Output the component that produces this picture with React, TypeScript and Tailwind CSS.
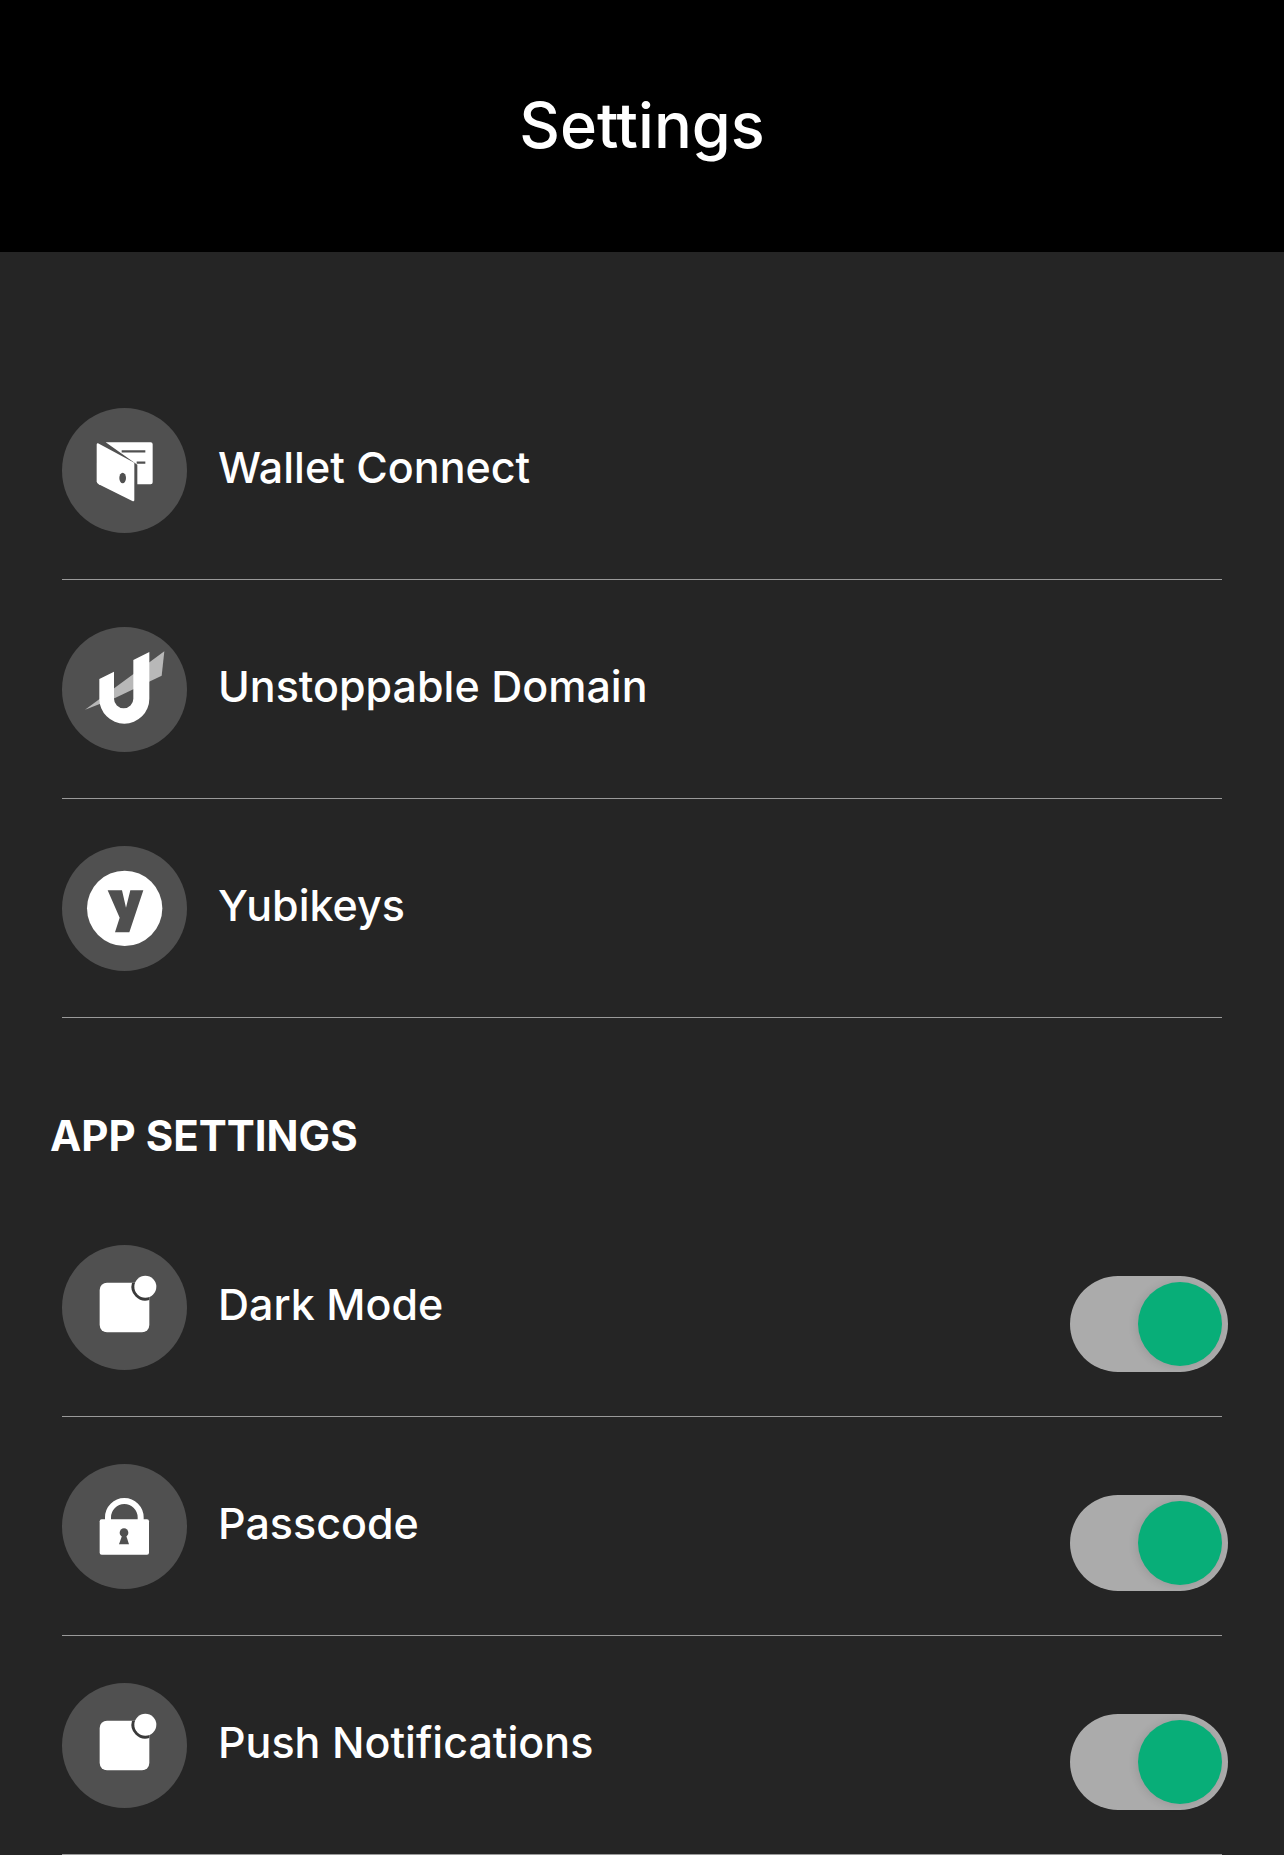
import type { ReactNode } from 'react';

const circle = '#505050';

function WalletIcon() {
  return (
    <svg viewBox="66 52 375 375" className="w-full h-full">
      <path d="M197 155H332Q338 155 338 161V275Q338 281 332 281H292V222Z" fill="#fff" />
      <path d="M245 182H316M290 216H316" stroke={circle} strokeWidth="7" fill="none" />
      <path d="M174 158L283 216V328Q283 333 277 331L176 281Q170 278 170 272V162Q170 156 174 158Z" fill="#fff" />
      <ellipse cx="248" cy="262" rx="10" ry="16" fill={circle} />
    </svg>
  );
}

function UnstoppableIcon() {
  return (
    <svg viewBox="66 52 375 375" className="w-full h-full">
      <path d="M135 300L373 125L365 198L225 265Z" fill="#b8b8b8" />
      <path
        d="M178 208L222 186V267A29 29 0 0 0 280 267V151L328 127V267A75 75 0 0 1 178 267Z"
        fill="#fff"
      />
    </svg>
  );
}

function YubikeyIcon() {
  return (
    <svg viewBox="66 47 375 375" className="w-full h-full">
      <circle cx="254" cy="234" r="113" fill="#fff" />
      <path d="M203 180H246L258 232L271 180H310L268 306H225L239 262Z" fill={circle} />
    </svg>
  );
}

function NotificationIcon() {
  return (
    <svg viewBox="66 45 375 375" className="w-full h-full">
      <rect x="179" y="158" width="149" height="149" rx="22" fill="#fff" />
      {/* dark ring only shows where the dot cuts into the square */}
      <path d="M276 158A42 42 0 0 0 328 210V158Z" fill="#3a3a3a" />
      <circle cx="316" cy="170" r="33" fill="#fff" />
    </svg>
  );
}

function LockIcon() {
  return (
    <svg viewBox="66 42 375 375" className="w-full h-full">
      <path d="M204 212V202A49 49 0 0 1 302 202V212" fill="none" stroke="#fff" strokeWidth="18" />
      <rect x="179" y="208" width="148" height="106" rx="6" fill="#fff" />
      <circle cx="252" cy="248" r="13" fill={circle} />
      <path d="M248 252H257L267 283H237Z" fill={circle} />
    </svg>
  );
}

function Toggle() {
  return (
    <div className="self-start mt-[78px] -mr-[6px] w-[158px] h-[96px] rounded-full bg-[#ababab] flex items-center justify-end pr-[6px]">
      <div className="w-[84px] h-[84px] rounded-full bg-[#08ae78] shadow-[-2px_1px_8px_rgba(0,0,0,0.1)]" />
    </div>
  );
}

function Row({ icon, label, toggle }: { icon: ReactNode; label: string; toggle?: boolean }) {
  return (
    <div className="h-[219px] border-b border-[#9a9a9a] flex items-center">
      <div className="w-[125px] h-[125px] rounded-full bg-[#505050] shrink-0">{icon}</div>
      <span className="ml-[31px] flex-1 text-[43px] font-medium text-white pb-[5px]">{label}</span>
      {toggle && <Toggle />}
    </div>
  );
}

export default function App() {
  return (
    <div className="h-[1855px] overflow-hidden bg-[#252525] font-['Inter',sans-serif]">
      <header className="h-[252px] bg-black flex items-center justify-center">
        <h1 className="text-[63px] font-medium text-white pb-[2px]">Settings</h1>
      </header>
      <div className="px-[62px] pt-[109px]">
        <Row icon={<WalletIcon />} label="Wallet Connect" />
        <Row icon={<UnstoppableIcon />} label="Unstoppable Domain" />
        <Row icon={<YubikeyIcon />} label="Yubikeys" />
        <h2 className="-ml-[12px] h-[180px] pt-[54px] flex items-center text-[42px] font-bold text-white">APP SETTINGS</h2>
        <Row icon={<NotificationIcon />} label="Dark Mode" toggle />
        <Row icon={<LockIcon />} label="Passcode" toggle />
        <Row icon={<NotificationIcon />} label="Push Notifications" toggle />
      </div>
    </div>
  );
}
